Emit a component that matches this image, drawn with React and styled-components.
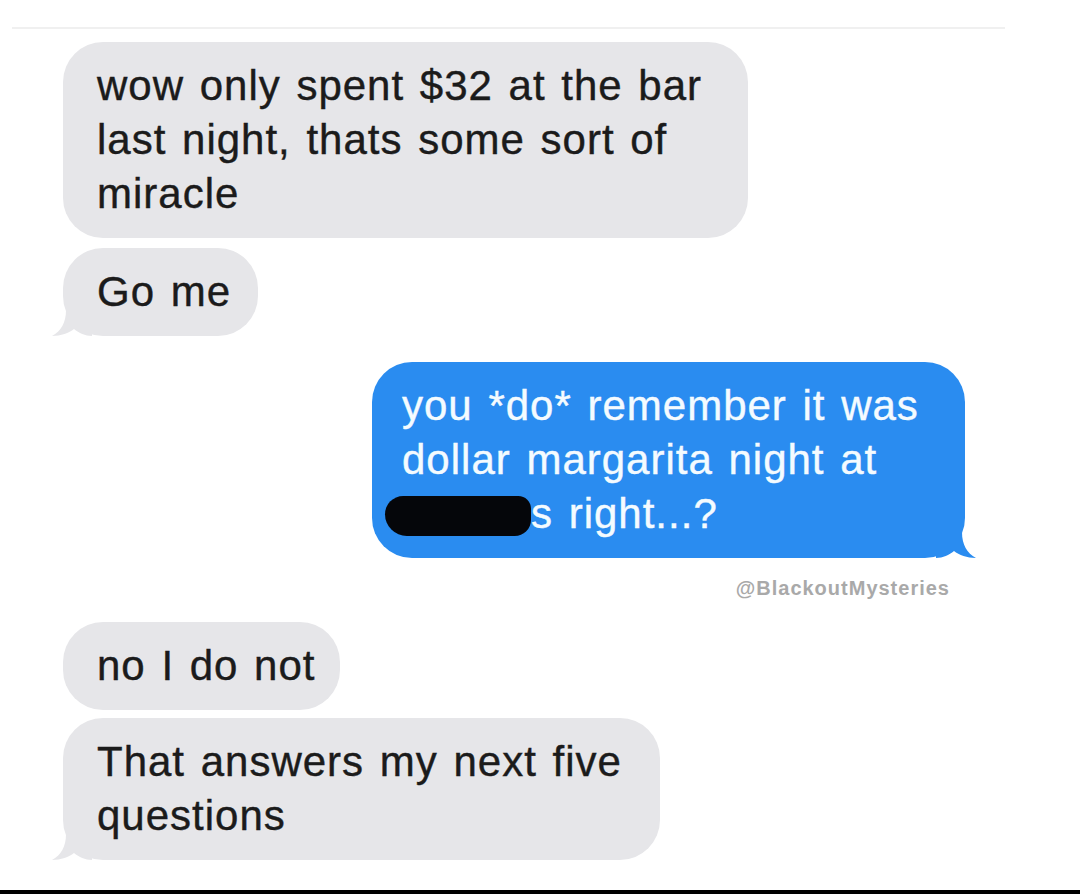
import styled, { createGlobalStyle } from 'styled-components';

const Global = createGlobalStyle`
    html, body {
        margin: 0;
        padding: 0;
        background: #ffffff;
    }
    body {
        font-family: 'Liberation Sans', Arial, sans-serif;
    }
`;

const Page = styled.div`
    width: 1080px;
    height: 894px;
    display: flex;
    flex-direction: column;
    background: #fff;
    overflow: hidden;
`;

const TopRule = styled.div`
    flex: none;
    height: 2px;
    margin: 27px 75px 0 12px;
    background: #f0f0f0;
`;

const Thread = styled.div`
    flex: 1;
    display: flex;
    flex-direction: column;
    padding: 13px 115px 0 63px;
`;

const Group = styled.div`
    display: flex;
    flex-direction: column;
    align-items: ${(p) => (p.$mine ? 'flex-end' : 'flex-start')};
    gap: ${(p) => p.$gap || 10}px;
    margin-top: ${(p) => p.$top || 0}px;
`;

const Bubble = styled.div`
    position: relative;
    box-sizing: border-box;
    width: ${(p) => p.$w}px;
    padding: 17px 0 17px ${(p) => (p.$mine ? 30 : 34)}px;
    border-radius: 40px;
    background: ${(p) => (p.$mine ? '#2a8cf0' : '#e6e6e9')};
    color: ${(p) => (p.$mine ? '#f4fbff' : '#1b1b1b')};
    font-size: 42px;
    line-height: 54px;
    letter-spacing: 1px;
    word-spacing: 3px;
    white-space: pre;
    -webkit-text-stroke: 0.4px currentColor;
`;

const Tail = styled.svg`
    position: absolute;
    bottom: 0;
    width: 40px;
    height: 26px;
    ${(p) => (p.$mine ? 'right: -11px; transform: scaleX(-1);' : 'left: -11px;')}
`;

const Redacted = styled.span`
    display: inline-block;
    width: 146px;
    height: 40px;
    margin: 0 0 0 -17px;
    border-radius: 20px 14px 18px 24px;
    background: #05060a;
    vertical-align: -8px;
`;

const Credit = styled.div`
    align-self: flex-end;
    margin: 0 15px 0 0;
    font-family: 'Liberation Sans', Arial, sans-serif;
    font-weight: bold;
    font-size: 20px;
    line-height: 22px;
    letter-spacing: 1px;
    color: #a9a9a9;
`;

const BottomBar = styled.div`
    flex: none;
    height: 4px;
    background: #000;
`;

const TailShape = ({ mine }) => (
    <Tail $mine={mine} viewBox="0 0 40 26">
        <path
            d="M14 0 C14 13 9 21 0 26 C9 26 17 23 22 19 C27 23 33 26 40 26 L40 0 Z"
            fill={mine ? '#2a8cf0' : '#e6e6e9'}
        />
    </Tail>
);

const App = () => {
    return (
        <>
            <Global />
            <Page>
                <TopRule />
                <Thread>
                    <Group>
                        <Bubble $w={685}>
                            {'wow only spent $32 at the bar\nlast night, thats some sort of\nmiracle'}
                        </Bubble>
                        <Bubble $w={195}>
                            Go me
                            <TailShape />
                        </Bubble>
                    </Group>
                    <Group $mine $top={26} $gap={19}>
                        <Bubble $mine $w={593}>
                            {'you *do* remember it was\ndollar margarita night at\n'}
                            <Redacted />
                            s right...?
                            <TailShape mine />
                        </Bubble>
                        <Credit>@BlackoutMysteries</Credit>
                    </Group>
                    <Group $top={23} $gap={8}>
                        <Bubble $w={277}>no I do not</Bubble>
                        <Bubble $w={597}>
                            {'That answers my next five\nquestions'}
                            <TailShape />
                        </Bubble>
                    </Group>
                </Thread>
                <BottomBar />
            </Page>
        </>
    );
};

export default App;
